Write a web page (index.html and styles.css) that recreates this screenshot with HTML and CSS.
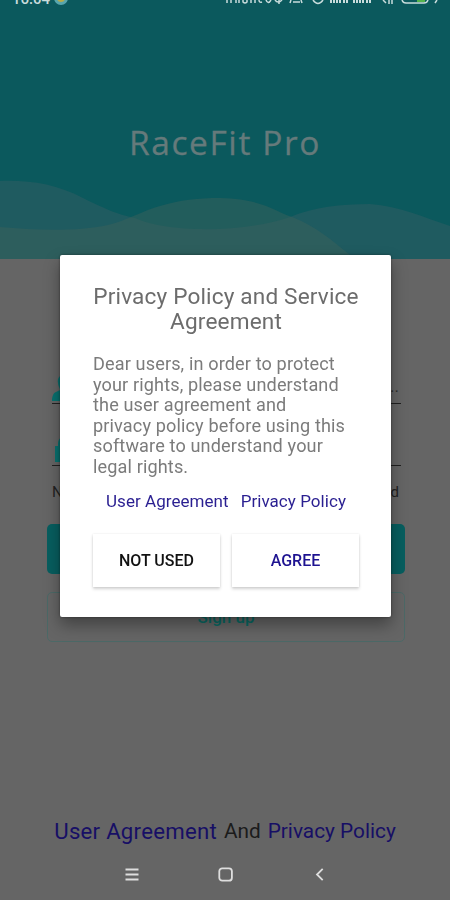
FILE: index.html
```html
<!DOCTYPE html>
<html lang="en">
<head>
    <meta charset="UTF-8">
    <meta name="viewport" content="width=device-width, initial-scale=1.0">
    <title>RaceFit Pro</title>
    <link rel="stylesheet" href="styles.css">
</head>
<body>
    <div class="page">
        <div class="header">
            <svg class="waves" width="450" height="80" viewBox="0 0 450 80">
                <path class="wave" d="M0 2C30 1 56 5 83 19C107 31 120 36 135 39C165 53 240 55 290 38C315 28 340 25 370 25C400 27 425 39 450 47V80H0Z"/>
                <path class="wave green" d="M0 48C35 51 75 53 108 46C125 42 145 31 160 27C180 21 198 19 220 19C262 20 274 32 292 38C318 48 335 64 355 80H0Z"/>
            </svg>
            <div class="status">
                <div class="status-left">
                    <span>16:04</span>
                    <i class="app-dot"></i>
                </div>
                <svg class="status-icons" width="216" height="8" viewBox="0 0 216 8">
                    <g fill="none" stroke="#c9dcdc" stroke-width="1.5">
                        <path d="M3 0V3M7 0V3M12 0V3M15 0V3M19 0V2Q21 4 23 2V0M27 0V3M31 0V3M35 0Q35 3 38 2M42 0Q44 5 47 0M51 0Q54 4 58 0M55 0V4"/>
                        <path d="M67 0L66 3M69 2H76M77 0L78 3M89 0Q94 7 99 0"/>
                        <path d="M107 3V0M110 3V0M113 3V0M116 3V0M120 3V0M123 3V0M130 3V0M133 3V0M136 3V0M139 3V0M143 3V0M146 3V0" stroke-width="2"/>
                        <path d="M159 0L162 3M165 0V4M168 0V4M178 0Q179 3 182 3H200Q203 3 204 0M213 0L211 3"/>
                    </g>
                    <path d="M193 0H201V2H193Z" fill="#54b44c"/>
                </svg>
            </div>
            <h1>RaceFit Pro</h1>
        </div>
        <div class="form">
            <div class="field">
                <svg width="28" height="28" viewBox="0 0 28 28">
                    <path d="M14 0C8 0 5 4 6 9C6 12 8 14 8 16L4 18C1 19 0 23 0 27H28C28 23 27 19 24 18L20 16C20 14 22 12 22 9C23 4 20 0 14 0Z"/>
                </svg>
                <span>...</span>
            </div>
            <div class="field">
                <svg width="28" height="28" viewBox="0 0 28 28">
                    <path d="M3 10H6V8C6 3 9 0 14 0S22 3 22 8V10H25V26H3ZM9 10H19V8C19 5 17 3 14 3S9 5 9 8Z"/>
                </svg>
            </div>
            <div class="links"><span>N</span><span>d</span></div>
            <div class="btn login"></div>
            <div class="btn sign">Sign up</div>
        </div>
        <div class="terms">
            <span class="blue user">User Agreement</span>
            <span class="and">And</span>
            <span class="blue">Privacy Policy</span>
        </div>
        <div class="nav">
            <svg width="16" height="16" viewBox="0 0 16 16"><path d="M1.5 2.5H14.5M1.5 7.5H14.5M1.5 12.5H14.5"/></svg>
            <svg width="16" height="16" viewBox="0 0 16 16"><rect x="1.3" y="1.3" width="12.6" height="12.4" rx="3"/></svg>
            <svg width="16" height="16" viewBox="0 0 16 16"><path d="M10.7 1.8L5 7.5L10.7 13.2"/></svg>
        </div>
    </div>
    <div class="mask">
        <div class="dialog">
            <h2>Privacy Policy and Service<br>Agreement</h2>
            <p>Dear users, in order to protect<br>your rights, please understand<br>the user agreement and<br>privacy policy before using this<br>software to understand your<br>legal rights.</p>
            <div class="dialog-links">
                <span>User Agreement</span>
                <span>Privacy Policy</span>
            </div>
            <div class="dialog-btns">
                <button>NOT USED</button>
                <button class="agree">AGREE</button>
            </div>
        </div>
    </div>
</body>
</html>
```
FILE: styles.css
```css
*{
    padding: 0;
    margin: 0;
    box-sizing: border-box;
}
body{
    width: 450px;
    height: 900px;
    overflow: hidden;
    background-color: #656565;
    font-family: Roboto, "Liberation Sans", sans-serif;
}
.page{
    height: 900px;
    display: flex;
    flex-direction: column;
}
.header{
    height: 259px;
    background-color: #0b595d;
    position: relative;
}
.waves{
    position: absolute;
    left: 0;
    bottom: 0;
}
.wave{
    fill: #1f5b60;
}
.wave.green{
    fill: #3e625c;
    fill-opacity: 0.45;
}
.status{
    height: 8px;
    overflow: hidden;
    display: flex;
    justify-content: space-between;
    padding: 0 10px 0 12px;
}
.status-left{
    display: flex;
    gap: 4px;
    font-size: 15px;
    font-weight: 500;
    line-height: 16px;
    margin-top: -9px;
    color: #c9dcdc;
}
.app-dot{
    width: 14px;
    height: 14px;
    border-radius: 50%;
    background-color: #b7ac49;
    border: 3px solid #58a6ad;
}
.header h1{
    margin-top: 113px;
    text-align: center;
    font-family: "Open Sans", "Noto Sans", sans-serif;
    font-size: 33.5px;
    font-weight: 400;
    line-height: 42px;
    letter-spacing: 1.6px;
    color: #657a7b;
    -webkit-text-stroke: 0.3px #657a7b;
}
.form{
    padding: 83px 45px 0 47px;
}
.field{
    height: 62px;
    margin: 0 4px 0 5px;
    border-bottom: 1px solid #202020;
    display: flex;
    justify-content: space-between;
    align-items: flex-end;
    padding-bottom: 1px;
    font-size: 17px;
    color: #303030;
}
.field svg{
    fill: #08716f;
}
.field span{
    padding: 0 2px 6px 0;
}
.links{
    display: flex;
    justify-content: space-between;
    padding: 17px 6px 0 5px;
    height: 58px;
    font-size: 15px;
    line-height: 18px;
    color: #222;
}
.btn{
    height: 50px;
    border-radius: 5px;
    text-align: center;
    font-size: 17px;
    line-height: 48px;
}
.login{
    background-color: #075e5f;
}
.sign{
    margin-top: 18px;
    border: 1px solid #4c6967;
    font-weight: 500;
    color: #096963;
}
.terms{
    margin-top: auto;
    height: 31px;
    display: flex;
    justify-content: center;
    gap: 7px;
    font-size: 20.8px;
    line-height: 24px;
    color: #1b1b1b;
}
.terms .blue{
    color: #170f65;
}
.terms .user{
    font-size: 22.2px;
    letter-spacing: 0.25px;
}
.nav{
    height: 50px;
    display: flex;
    justify-content: center;
    align-items: center;
    gap: 78px;
    padding-left: 2px;
}
.nav svg{
    fill: none;
    stroke: #dedede;
    stroke-width: 1.8;
}
.mask{
    position: fixed;
    top: 0;
    left: 0;
    width: 450px;
    height: 900px;
    padding: 255px 59px 0 60px;
}
.dialog{
    height: 362px;
    background-color: #fff;
    border-radius: 2px;
    padding: 29px 32px 0 33px;
    box-shadow: 0 8px 16px rgba(0,0,0,.35), 0 0 3px rgba(0,0,0,.4);
}
.dialog h2{
    font-size: 22.6px;
    font-weight: 400;
    line-height: 25px;
    letter-spacing: 0.16px;
    text-align: center;
    white-space: nowrap;
    color: #6c6c6c;
}
.dialog p{
    margin-top: 20px;
    font-size: 18.1px;
    line-height: 20.6px;
    letter-spacing: 0.13px;
    white-space: nowrap;
    color: #7b7b7b;
}
.dialog-links{
    margin-top: 13px;
    display: flex;
    justify-content: center;
    gap: 12px;
    font-size: 17px;
    letter-spacing: 0.05px;
    line-height: 20px;
    white-space: nowrap;
    color: #2a1f91;
}
.dialog-btns{
    margin-top: 23px;
    display: flex;
    gap: 12px;
}
.dialog-btns button{
    flex: 1;
    height: 53px;
    padding-top: 1px;
    border: none;
    background-color: #fff;
    box-shadow: 0 2px 3px rgba(0,0,0,.18), 0 0 2px rgba(0,0,0,.08);
    font-family: inherit;
    font-size: 16px;
    font-weight: 500;
    color: #111;
}
.dialog-btns .agree{
    color: #1e1391;
}
```
